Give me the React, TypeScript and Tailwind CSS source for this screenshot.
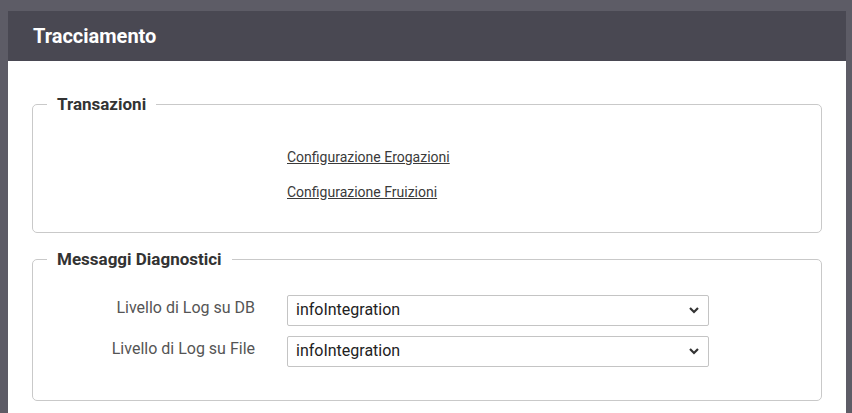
import React from "react";

export default function App() {
  return (
    <div className="w-[852px] h-[413px] bg-[#5d5c66] pt-[11px] pl-[8px] pr-[6px] overflow-hidden" style={{ fontFamily: "Roboto, sans-serif" }}>
      <div className="bg-white h-full">
        <div className="h-[50px] bg-[#494852] flex items-center pl-[25px]">
          <h1 className="text-white text-[20px] font-bold">Tracciamento</h1>
        </div>
        <div className="px-[24px] pt-[31px]">
          <fieldset className="border border-[#c9c9c9] rounded-[5px] px-[14px] h-[141px]">
            <legend className="px-[10px] text-[17px] font-bold text-[#333]">Transazioni</legend>
            <div className="flex flex-col gap-[14px] pl-[240px] pt-[29px] text-[14px] text-[#3a3a3a]">
              <a href="#" className="underline">Configurazione Erogazioni</a>
              <a href="#" className="underline">Configurazione Fruizioni</a>
            </div>
          </fieldset>
          <fieldset className="mt-[14px] border border-[#c9c9c9] rounded-[5px] px-[14px] h-[154px]">
            <legend className="px-[10px] text-[17px] font-bold text-[#333]">Messaggi Diagnostici</legend>
            <div className="flex flex-col gap-[10px] pt-[22px]">
              {["Livello di Log su DB", "Livello di Log su File"].map((l) => (
                <div key={l} className="flex items-center">
                  <label className="w-[208px] text-right text-[16px] text-[#555] -mt-[4px]">{l}</label>
                  <div className="ml-[32px] w-[422px] h-[31px] border border-[#c4c4c4] rounded-[2px] flex items-center justify-between pl-[8px] pr-[8px]">
                    <span className="text-[16px] text-[#222]">infoIntegration</span>
                    <svg width="12" height="8" viewBox="0 0 12 8"><path d="M2 2l4 4 4-4" fill="none" stroke="#333" strokeWidth="2.2" /></svg>
                  </div>
                </div>
              ))}
            </div>
          </fieldset>
        </div>
      </div>
    </div>
  );
}
